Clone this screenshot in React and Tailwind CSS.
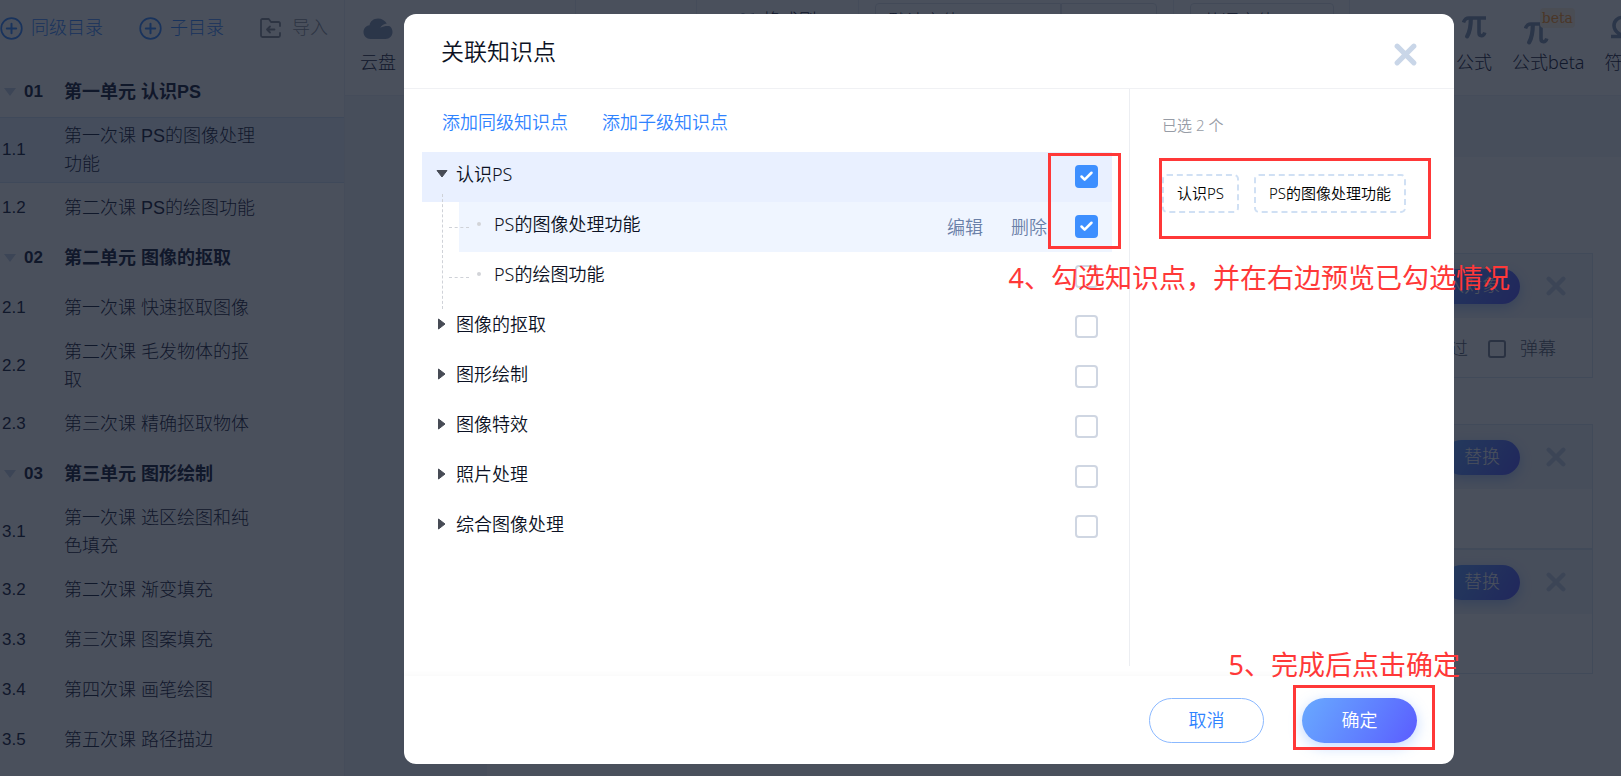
import { useState } from 'react';
import { Check } from 'lucide-react';

const units = [
    {
        no: '01',
        title: '第一单元 认识PS',
        lessons: [
            { no: '1.1', title: '第一次课 PS的图像处理功能', active: true },
            { no: '1.2', title: '第二次课 PS的绘图功能' }
        ]
    },
    {
        no: '02',
        title: '第二单元 图像的抠取',
        lessons: [
            { no: '2.1', title: '第一次课 快速抠取图像' },
            { no: '2.2', title: '第二次课 毛发物体的抠取' },
            { no: '2.3', title: '第三次课 精确抠取物体' }
        ]
    },
    {
        no: '03',
        title: '第三单元 图形绘制',
        lessons: [
            { no: '3.1', title: '第一次课 选区绘图和纯色填充' },
            { no: '3.2', title: '第二次课 渐变填充' },
            { no: '3.3', title: '第三次课 图案填充' },
            { no: '3.4', title: '第四次课 画笔绘图' },
            { no: '3.5', title: '第五次课 路径描边' }
        ]
    }
];

const points = [
    { name: '认识PS', open: true },
    { name: 'PS的图像处理功能', child: true, actions: true },
    { name: 'PS的绘图功能', child: true },
    { name: '图像的抠取' },
    { name: '图形绘制' },
    { name: '图像特效' },
    { name: '照片处理' },
    { name: '综合图像处理' }
];

const PlusCircle = () => (
    <svg width="23" height="23" viewBox="0 0 23 23" fill="none" stroke="currentColor" strokeWidth="2" strokeLinecap="round">
        <circle cx="11.5" cy="11.5" r="10.3" strokeWidth="1.7" />
        <path d="M11.5 6.8v9.4M6.8 11.5h9.4" />
    </svg>
);

const ImportIcon = () => (
    <svg width="22" height="20" viewBox="0 0 22 20" fill="none" stroke="currentColor" strokeWidth="1.8" strokeLinecap="round" strokeLinejoin="round">
        <path d="M20 8V5.5Q20 4 18.500 4H11L8.800 1H2.500Q1 1 1 2.500V17.500Q1 19 2.500 19H18.500Q20 19 20 17.500V15" />
        <path d="M14.500 11.500H7M10 8.500L7 11.500L10 14.500" />
    </svg>
);

const CloudIcon = () => (
    <svg width="30" height="22" viewBox="0 0 30 22" fill="currentColor" className="mt-1">
        <path d="M15 0.500C10.500 0.500 7.200 3.300 6.500 7.200C2.800 7.800 0.500 10.600 0.500 14C0.500 18 3.500 21 7.500 21H22.500C26.500 21 29.500 18 29.500 14C29.500 11.500 28.500 9.600 26.800 8.300C23.800 7.800 20.500 8.300 17.200 9.800C18.800 7.300 21.200 5.800 23.800 5.600C22 2.500 18.800 0.500 15 0.500Z" />
    </svg>
);

const PiIcon = () => (
    <svg width="25" height="24" viewBox="0 0 25 24" fill="none" stroke="currentColor">
        <path d="M1.500 7.500C2.600 4 4 3 7 3H24" strokeWidth="3.600" />
        <path d="M8.800 4C8.800 11 8.200 16 5.200 21.300" strokeWidth="4.200" strokeLinecap="round" />
        <path d="M17 4V17.500C17 21.500 21.500 22 22.800 17.500" strokeWidth="3.600" />
    </svg>
);

const OmegaIcon = () => (
    <svg width="26" height="24" viewBox="0 0 26 24" fill="none" stroke="currentColor" strokeWidth="3.600">
        <path d="M1 21.500H9.500V19C5.500 16.500 4 13.500 4 10.500C4 5.500 8 2.300 13 2.300C18 2.300 22 5.500 22 10.500C22 13.500 20.500 16.500 16.500 19V21.500H25" />
    </svg>
);

const CrossIcon = ({ size }) => (
    <svg width={size} height={size} viewBox="0 0 22 22" fill="none" stroke="currentColor" strokeWidth="4.800" strokeLinecap="round">
        <path d="M3 3L19 19M19 3L3 19" />
    </svg>
);

const Caret = ({ open }) => (
    <svg width="12" height="12" viewBox="0 0 12 12" fill="#474b55" stroke="#474b55" strokeLinejoin="round">
        {open ? <path d="M1 2.500H11L6 9Z" /> : <path d="M2.500 1V11L9 6Z" />}
    </svg>
);

const Sidebar = () => (
    <aside className="w-[345px] shrink-0 border-r border-[#ebeef5] bg-white">
        <div className="flex h-[67px] items-start pt-4">
            <button type="button" className="flex items-center gap-2 text-[#3d8bff]">
                <PlusCircle />
                同级目录
            </button>
            <button type="button" className="ml-9 flex items-center gap-2 text-[#3d8bff]">
                <PlusCircle />
                子目录
            </button>
            <button type="button" className="ml-9 flex items-center gap-2.5 text-[#8a8f99]">
                <ImportIcon />
                导入
            </button>
        </div>
        <nav>
            {units.map((unit) => (
                <section key={unit.no}>
                    <h3 className="flex h-[50px] items-center pl-1 font-bold">
                        <svg width="12" height="8" viewBox="0 0 12 8" fill="#c5d2e6" aria-hidden="true">
                            <path d="M0 0H12L6 8Z" />
                        </svg>
                        <span className="ml-2 w-10 text-[17px]">{unit.no}</span>
                        {unit.title}
                    </h3>
                    {unit.lessons.map((lesson) => (
                        <a
                            key={lesson.no}
                            href={`#${lesson.no}`}
                            className={
                                lesson.active
                                    ? 'flex items-center border-y border-[#d3e3f7] bg-[#e9f3ff] py-1 pl-0.5'
                                    : 'flex items-center py-[5px] pl-0.5'
                            }
                        >
                            <span className="w-[62px] text-[17px]">{lesson.no}</span>
                            <span className="flex min-h-10 w-[195px] items-center leading-7">{lesson.title}</span>
                        </a>
                    ))}
                </section>
            ))}
        </nav>
    </aside>
);

const Tool = ({ label, children }) => (
    <button type="button" className="flex shrink-0 flex-col items-center whitespace-nowrap">
        <span className="relative flex h-[46px] items-center text-[#8496b3]">{children}</span>
        {label}
    </button>
);

const Toolbar = () => (
    <header className="flex h-[96px] overflow-hidden border-b border-[#ebeef5] bg-white font-['Noto_Sans','Noto_Sans_CJK_SC',sans-serif]">
        <div className="w-[231px] shrink-0 border-r border-[#ebeef5] pt-1 pl-[15px]">
            <Tool label="云盘"><CloudIcon /></Tool>
        </div>
        <div className="w-[121px] shrink-0 border-r border-[#ebeef5]" />
        <div className="flex w-[162px] shrink-0 items-start justify-center gap-2 border-r border-[#ebeef5] pt-2">
            <svg width="16" height="18" viewBox="0 0 16 18" fill="#8496b3" className="mt-1" aria-hidden="true">
                <path d="M1 3Q4 -1 7 3L15 1V9L9 17L1 10Z" />
            </svg>
            <button type="button">格式刷</button>
        </div>
        <div className="flex w-[315px] shrink-0 items-start border-r border-[#ebeef5] pt-[3px] pl-4">
            <select aria-label="字体" className="h-9 w-[186px] appearance-none rounded-l border border-[#dfe4ec] px-3">
                <option>默认字体</option>
            </select>
            <select aria-label="字号" className="h-9 w-24 appearance-none rounded-r border border-[#dfe4ec] px-4">
                <option>16</option>
            </select>
        </div>
        <div className="flex w-44 shrink-0 items-start border-r border-[#ebeef5] pt-[3px] pl-4">
            <select aria-label="英语字体" className="h-9 w-36 appearance-none rounded border border-[#dfe4ec] px-3">
                <option>英语字体</option>
            </select>
        </div>
        <div className="flex items-start gap-5 pt-1 pl-[106px]">
            <Tool label="公式"><PiIcon /></Tool>
            <Tool label="公式beta">
                <span className="pt-3 pr-6"><PiIcon /></span>
                <span className="absolute top-1 left-4 rounded bg-[#fff1e0] px-0.5 font-['DejaVu_Serif',serif] text-sm text-[#ff9a2e]">beta</span>
            </Tool>
            <Tool label="符号"><OmegaIcon /></Tool>
        </div>
    </header>
);

const Card = ({ action, className, children }) => (
    <article className={`border border-[#dce6f4] ${className ?? ''}`}>
        <div className="flex h-16 items-center justify-end bg-[#f2f5fb] pr-[26px]">
            <button type="button" className="mr-[26px] h-[35px] rounded-full bg-linear-120 from-[#69a9ff] to-[#5b5bff] px-5 text-white shadow-[0_4px_12px_rgba(80,140,255,0.4)]">
                {action}
            </button>
            <button type="button" aria-label="移除" className="text-[#c5d2e6]">
                <CrossIcon size={20} />
            </button>
        </div>
        <div className="flex h-[59px] items-center justify-end pt-0.5 pr-9 text-[#5a6272]">{children}</div>
    </article>
);

const Editor = () => (
    <div className="flex-1 pt-[61px] pl-[142px]">
        <div className="h-full bg-white pt-24 pr-7 pl-12">
            <Card action="插入对象" className="mb-[46px]">
                <label className="mr-5">允许跳过</label>
                <label className="flex items-center gap-3.5">
                    <input type="checkbox" className="size-[18px] appearance-none rounded-[3px] border-2 border-[#7f8797]" />
                    弹幕
                </label>
            </Card>
            <Card action="替换" />
            <Card action="替换" />
        </div>
    </div>
);

const PointRow = ({ point, checked, onToggle }) => {
    const tone = checked ? (point.child ? 'bg-[#eff5ff]' : 'bg-[#e9f0ff]') : '';
    return (
        <li className={point.child ? 'flex pl-[37px]' : 'flex'}>
            <div className={`relative flex h-[50px] flex-1 items-center pr-3.5 pb-px ${tone}`}>
                {point.child ? (
                    <div className="flex flex-1 items-center pb-1.5">
                        <span className="absolute top-1/2 -left-2.5 w-5 border-t border-dashed border-[#cfd2d8]" />
                        <span className="ml-[18px] size-1 rounded-full bg-[#d2d4d8]" />
                        <span className="ml-[13px]">{point.name}</span>
                    </div>
                ) : (
                    <div className="flex flex-1 items-center pb-1.5">
                        <button type="button" aria-label="展开" className="ml-3.5"><Caret open={point.open} /></button>
                        <span className="ml-2">{point.name}</span>
                    </div>
                )}
                {point.actions && (
                    <span className="mr-7 flex gap-7 text-[#6a80a8]">
                        <button type="button">编辑</button>
                        <button type="button">删除</button>
                    </span>
                )}
                <label className="relative size-[23px]">
                    <input
                        type="checkbox"
                        aria-label={point.name}
                        checked={checked}
                        onChange={onToggle}
                        className="block size-full appearance-none rounded-[4px] border-2 border-[#cfd6e2] bg-white checked:border-[#3d8fff] checked:bg-[#3d8fff]"
                    />
                    {checked && <Check size={15} strokeWidth={4} className="pointer-events-none absolute top-1 left-1 text-white" />}
                </label>
            </div>
        </li>
    );
};

const App = () => {
    const [selected, setSelected] = useState(['认识PS', 'PS的图像处理功能']);

    const toggle = (name) =>
        setSelected((prev) => (prev.includes(name) ? prev.filter((n) => n !== name) : [...prev, name]));

    return (
        <div className="relative min-h-screen overflow-hidden bg-[#f3f5fa] font-['Liberation_Sans','Noto_Sans_CJK_SC',sans-serif] text-[18px] leading-6 font-light text-[#18203a]">
            <div className="flex min-h-screen">
                <Sidebar />
                <main className="flex min-w-0 flex-1 flex-col">
                    <Toolbar />
                    <Editor />
                </main>
            </div>

            {/* Mask + dialog */}
            <div className="absolute inset-0 flex bg-[rgba(13,21,37,0.75)] pt-3.5 pr-[167px] pb-3 pl-[404px]">
                <div role="dialog" aria-label="关联知识点" className="relative flex flex-1 flex-col rounded-xl bg-white font-['Noto_Sans','Noto_Sans_CJK_SC',sans-serif] font-[350] text-[#0c1224]">
                    <div className="flex h-[75px] shrink-0 items-center justify-between border-b border-[#f0f1f4] pr-[37px] pl-[37px]">
                        <h2 className="text-[23px] leading-8">关联知识点</h2>
                        <button type="button" aria-label="关闭" className="pt-1.5 text-[#c9d6e8]">
                            <CrossIcon size={23} />
                        </button>
                    </div>

                    <div className="flex flex-1 pb-2.5">
                        <div className="flex-1 pt-[21px] pr-[17px] pl-[18px]">
                            <div className="mb-[18px] flex gap-[34px] pl-5 text-[#2f83ff]">
                                <button type="button">添加同级知识点</button>
                                <button type="button">添加子级知识点</button>
                            </div>
                            <ul className="relative">
                                {points.map((point) => (
                                    <PointRow
                                        key={point.name}
                                        point={point}
                                        checked={selected.includes(point.name)}
                                        onToggle={() => toggle(point.name)}
                                    />
                                ))}
                                <span className="absolute top-[42px] left-5 h-[115px] border-l border-dashed border-[#cfd2d8]" />
                            </ul>
                        </div>
                        <div className="w-[325px] shrink-0 border-l border-[#eceef2] pt-6 pl-8">
                            <p className="text-[15px] text-[#979ca6]">已选 {selected.length} 个</p>
                            <div className="mt-[37px] flex flex-wrap gap-[15px] text-[15px] text-black">
                                {selected.map((name) => (
                                    <span key={name} className="flex h-[39px] items-center rounded-[5px] border-2 border-dashed border-[#d0e0f4] px-[13px] pb-px">
                                        {name}
                                    </span>
                                ))}
                            </div>
                        </div>
                    </div>

                    <div className="flex h-[88px] shrink-0 items-center justify-end gap-[38px] rounded-b-xl pr-[37px] shadow-[0_-3px_5px_rgba(0,0,0,0.02)]">
                        <button type="button" className="h-[45px] w-[115px] rounded-full border border-[#8bb9ff] text-[#2f83ff]">取消</button>
                        <button type="button" className="h-[45px] w-[115px] rounded-full bg-linear-120 from-[#69a9ff] to-[#5b5bff] text-white shadow-[0_4px_14px_rgba(80,150,255,0.35)]">确定</button>
                    </div>

                    {/* Step marks drawn over the dialog */}
                    <div className="pointer-events-none font-normal whitespace-nowrap text-[#ff3838]">
                        <div className="absolute top-[139px] right-[333px] h-24 w-[73px] border-3" />
                        <div className="absolute top-36 right-[23px] h-[81px] w-[272px] border-3" />
                        <div className="absolute right-[19px] bottom-3.5 h-[65px] w-[142px] border-3" />
                        <p className="absolute top-[244px] -right-14 text-[27px] leading-10">4、勾选知识点，并在右边预览已勾选情况</p>
                        <p className="absolute right-[-6px] bottom-[79px] text-[27px] leading-10">5、完成后点击确定</p>
                    </div>
                </div>
            </div>
        </div>
    );
};

export default App;
